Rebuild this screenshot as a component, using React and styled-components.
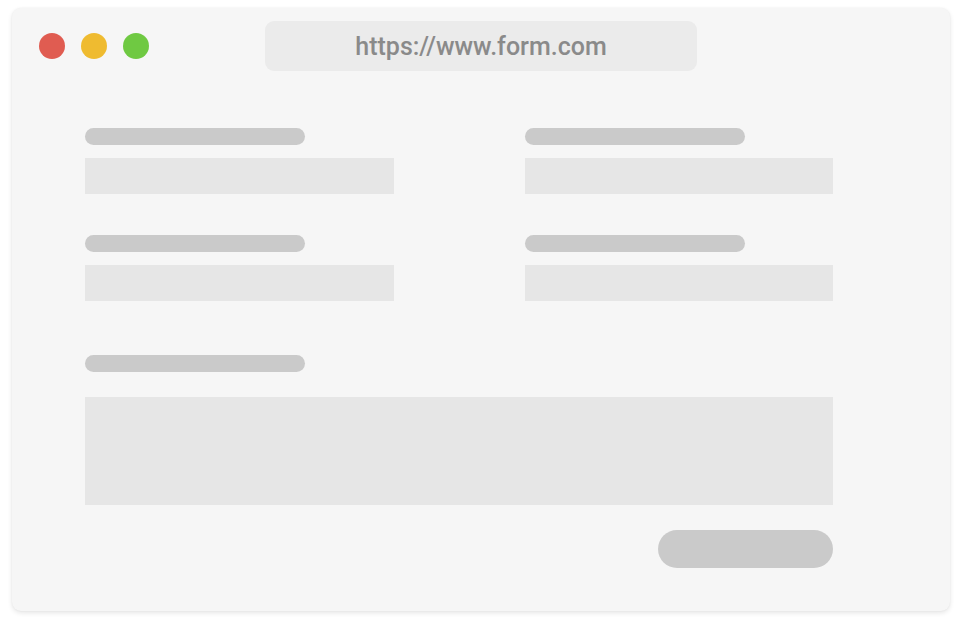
import React from "react"
import styled, { createGlobalStyle } from "styled-components"

const GlobalStyle = createGlobalStyle`
  html, body {
    margin: 0;
    padding: 0;
    background: #ffffff;
    font-family: Roboto, "Liberation Sans", sans-serif;
  }
`

function App() {
  return (
    <>
      <GlobalStyle />
      <Page>
        <Window>
          <TitleBar>
            <Dots>
              <Dot color="#e05c51" />
              <Dot color="#efbb30" />
              <Dot color="#6fc942" />
            </Dots>
            <UrlBar>https://www.form.com</UrlBar>
          </TitleBar>
          <Form>
            <Grid>
              <Field>
                <Label />
                <Input />
              </Field>
              <Field>
                <Label />
                <Input />
              </Field>
              <Field>
                <Label />
                <Input />
              </Field>
              <Field>
                <Label />
                <Input />
              </Field>
            </Grid>
            <Message>
              <Label />
              <TextArea />
            </Message>
            <Actions>
              <Submit />
            </Actions>
          </Form>
        </Window>
      </Page>
    </>
  )
}

export default App

const Page = styled.div`
  width: 962px;
  height: 618px;
  padding: 8px 12px 0 12px;
  box-sizing: border-box;
`

const Window = styled.div`
  width: 938px;
  height: 603px;
  background: #f6f6f6;
  border-radius: 9px;
  box-shadow: 0 2px 5px rgba(0, 0, 0, 0.1), 0 0 2px rgba(0, 0, 0, 0.05);
  display: flex;
  flex-direction: column;
`

const TitleBar = styled.div`
  height: 74px;
  display: flex;
  align-items: center;
  padding: 0 0 0 27px;
`

const Dots = styled.div`
  display: flex;
  gap: 16px;
  margin-top: 1px;
`

const Dot = styled.span`
  width: 26px;
  height: 26px;
  border-radius: 50%;
  background: ${props => props.color};
`

const UrlBar = styled.div`
  margin-left: 116px;
  margin-top: 2px;
  width: 432px;
  height: 50px;
  border-radius: 9px;
  background: #ebebeb;
  color: #8a8a8a;
  font-size: 25px;
  font-weight: 500;
  display: flex;
  align-items: center;
  justify-content: center;
`

const Form = styled.div`
  padding: 46px 117px 0 73px;
  display: flex;
  flex-direction: column;
`

const Grid = styled.div`
  display: grid;
  grid-template-columns: 309px 308px;
  column-gap: 131px;
  row-gap: 41px;
`

const Field = styled.div`
  display: flex;
  flex-direction: column;
  gap: 13px;
`

const Label = styled.div`
  width: 220px;
  height: 17px;
  border-radius: 9px;
  background: #cacaca;
`

const Input = styled.div`
  height: 36px;
  background: #e6e6e6;
`

const Message = styled.div`
  margin-top: 54px;
  display: flex;
  flex-direction: column;
  gap: 25px;
`

const TextArea = styled.div`
  height: 108px;
  background: #e6e6e6;
`

const Actions = styled.div`
  margin-top: 25px;
  display: flex;
  justify-content: flex-end;
`

const Submit = styled.div`
  width: 175px;
  height: 38px;
  border-radius: 19px;
  background: #cacaca;
`
